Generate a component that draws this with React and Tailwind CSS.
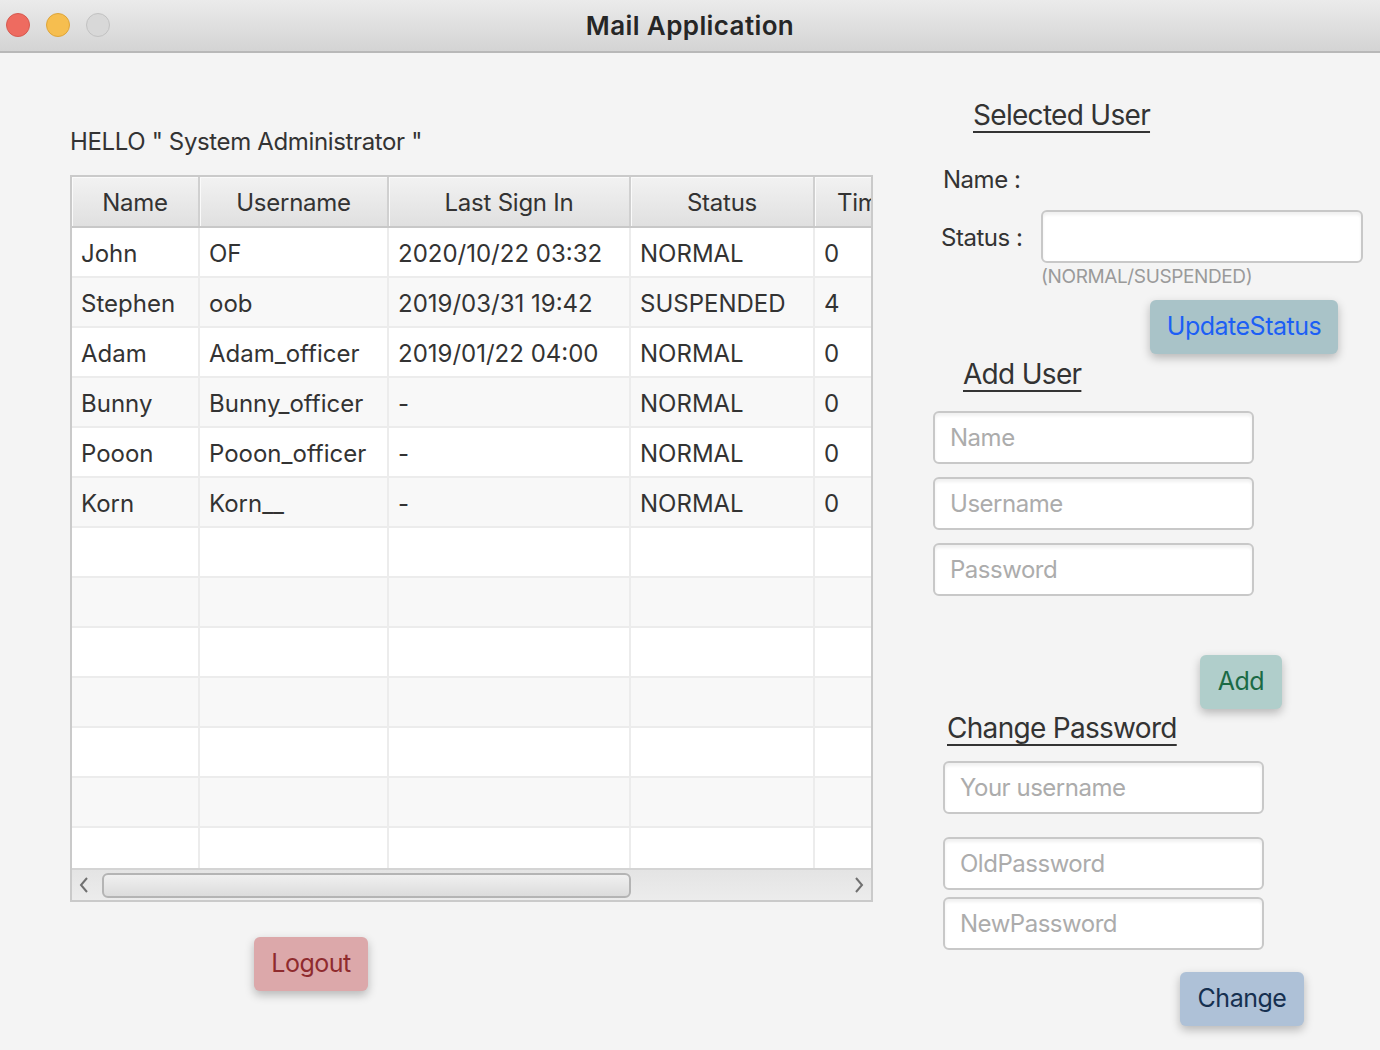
import React from "react";

const users = [
  { name: "John", username: "OF", last: "2020/10/22 03:32", status: "NORMAL", times: "0" },
  { name: "Stephen", username: "oob", last: "2019/03/31 19:42", status: "SUSPENDED", times: "4" },
  { name: "Adam", username: "Adam_officer", last: "2019/01/22 04:00", status: "NORMAL", times: "0" },
  { name: "Bunny", username: "Bunny_officer", last: "-", status: "NORMAL", times: "0" },
  { name: "Pooon", username: "Pooon_officer", last: "-", status: "NORMAL", times: "0" },
  { name: "Korn", username: "Korn__", last: "-", status: "NORMAL", times: "0" },
];

const cols = ["w-[128px]", "w-[189px]", "w-[242px]", "w-[184px]", "w-[120px]"];

const Field = ({ placeholder, className = "" }) => (
  <div
    className={`h-[53px] w-[321px] bg-white border-2 border-[#c8c8c8] rounded-[6px] shadow-[inset_0_3px_3px_rgba(0,0,0,0.06)] flex items-center pl-[15px] text-[24px] tracking-[-0.02em] text-[#acacac] ${className}`}
  >
    {placeholder}
  </div>
);

const Heading = ({ children, className = "" }) => (
  <div
    className={`text-[28px] leading-[34px] tracking-[-0.025em] text-[#333] underline decoration-2 underline-offset-[6px] ${className}`}
  >
    {children}
  </div>
);

const App = () => {
  const rows = [...users, ...Array(7).fill(null)];

  return (
    <div
      className="w-[1380px] h-[1050px] bg-[#f4f4f4] overflow-hidden flex flex-col"
      style={{ fontFamily: "Inter, 'Noto Sans', sans-serif" }}
    >
      {/* title bar */}
      <div className="h-[53px] shrink-0 relative flex items-center justify-center bg-gradient-to-b from-[#ebebeb] to-[#d4d4d4] border-b-2 border-[#b8b8b8]">
        <div className="absolute left-[6px] top-[13px] flex gap-[16px]">
          <span className="w-[24px] h-[24px] rounded-full bg-[#ee6b60] border border-[#d65a50]"></span>
          <span className="w-[24px] h-[24px] rounded-full bg-[#f6be4f] border border-[#dea53a]"></span>
          <span className="w-[24px] h-[24px] rounded-full bg-[#d8d8d8] border border-[#c2c2c2]"></span>
        </div>
        <span className="text-[26px] tracking-[0.015em] font-semibold text-[#262626]">Mail Application</span>
      </div>

      <div className="flex flex-1">
        {/* left side */}
        <div className="ml-[70px] w-[803px] flex flex-col">
          <div className="mt-[74px] text-[24px] leading-[30px] tracking-[-0.015em] text-[#333]">
            HELLO " System Administrator "
          </div>
          <div className="mt-[18px] h-[727px] border-2 border-[#cacaca] flex flex-col overflow-hidden bg-white">
            {/* header */}
            <div className="flex h-[51px] shrink-0 border-b-2 border-[#c8c8c8]">
              {["Name", "Username", "Last Sign In", "Status", "Times"].map((h, i) => (
                <div
                  key={h}
                  className={`${cols[i]} shrink-0 flex items-center justify-center pt-[3px] text-[24px] tracking-[-0.01em] text-[#333] bg-gradient-to-b from-[#f2f2f2] to-[#e0e0e0] border-r-2 border-[#d0d0d0] shadow-[inset_1px_1px_0_#fafafa] ${i === 4 ? "justify-start pl-[22px]" : ""}`}
                >
                  {h}
                </div>
              ))}
            </div>
            {/* rows */}
            <div className="flex-1 overflow-hidden">
              {rows.map((u, r) => (
                <div
                  key={r}
                  className={`flex h-[50px] border-b-2 border-[#ececec] ${r % 2 === 0 ? "bg-white" : "bg-[#f8f8f8]"}`}
                >
                  {[u?.name, u?.username, u?.last, u?.status, u?.times].map((v, i) => (
                    <div
                      key={i}
                      className={`${cols[i]} shrink-0 flex items-center pl-[9px] pt-[3px] text-[24px] text-[#333] border-r-2 border-[#ececec] whitespace-nowrap`}
                    >
                      {v ?? ""}
                    </div>
                  ))}
                </div>
              ))}
            </div>
            {/* scroll bar */}
            <div className="h-[32px] shrink-0 flex items-center bg-gradient-to-b from-[#e4e4e4] to-[#ececec] border-t-2 border-[#d4d4d4]">
              <svg width="30" height="30" viewBox="0 0 30 30">
                <path d="M15 8 L9 15 L15 22" stroke="#707070" strokeWidth="2" fill="none" />
              </svg>
              <div className="w-[529px] h-[25px] rounded-[6px] border-2 border-[#b4b4b4] bg-gradient-to-b from-[#f0f0f0] to-[#dcdcdc]"></div>
              <div className="flex-1"></div>
              <svg width="30" height="30" viewBox="0 0 30 30" className="mr-[0px]">
                <path d="M15 8 L21 15 L15 22" stroke="#707070" strokeWidth="2" fill="none" />
              </svg>
            </div>
          </div>
          <button className="mt-[35px] ml-[184px] w-[114px] h-[54px] rounded-[6px] bg-[#dca8aa] text-[#8f2b2e] text-[25px] tracking-[-0.02em] shadow-[0_4px_10px_rgba(0,0,0,0.25)]">
            Logout
          </button>
        </div>

        {/* right side */}
        <div className="ml-[57px] flex flex-col items-start">
          <Heading className="mt-[45px] ml-[43px]">Selected User</Heading>
          <div className="mt-[33px] ml-[13px] text-[24px] leading-[30px] tracking-[-0.02em] text-[#333]">Name :</div>
          <div className="mt-[15px] flex items-center">
            <span className="ml-[11px] w-[100px] pt-[3px] text-[24px] tracking-[-0.02em] text-[#333]">Status :</span>
            <Field placeholder="" className="w-[322px]" />
          </div>
          <div className="ml-[111px] mt-[1px] text-[19px] leading-[26px] tracking-[-0.02em] text-[#9a9a9a]">(NORMAL/SUSPENDED)</div>
          <button className="mt-[10px] ml-[220px] w-[188px] h-[54px] rounded-[6px] bg-[#a9c3c8] text-[#1c5ff5] text-[25px] tracking-[-0.02em] shadow-[0_4px_10px_rgba(0,0,0,0.25)]">
            UpdateStatus
          </button>
          <Heading className="mt-[3px] ml-[33px]">Add User</Heading>
          <Field placeholder="Name" className="mt-[20px] ml-[3px]" />
          <Field placeholder="Username" className="mt-[13px] ml-[3px]" />
          <Field placeholder="Password" className="mt-[13px] ml-[3px]" />
          <button className="mt-[59px] ml-[270px] w-[82px] h-[54px] rounded-[6px] bg-[#b0cecb] text-[#1b6a45] text-[25px] tracking-[-0.02em] shadow-[0_4px_10px_rgba(0,0,0,0.25)]">
            Add
          </button>
          <Heading className="mt-[2px] ml-[17px]">Change Password</Heading>
          <Field placeholder="Your username" className="mt-[16px] ml-[13px]" />
          <Field placeholder="OldPassword" className="mt-[23px] ml-[13px]" />
          <Field placeholder="NewPassword" className="mt-[7px] ml-[13px]" />
          <button className="mt-[22px] ml-[250px] w-[124px] h-[54px] rounded-[6px] bg-[#aec1d7] text-[#163050] text-[25px] tracking-[-0.02em] shadow-[0_4px_10px_rgba(0,0,0,0.25)]">
            Change
          </button>
        </div>
      </div>
    </div>
  );
};

export default App;
